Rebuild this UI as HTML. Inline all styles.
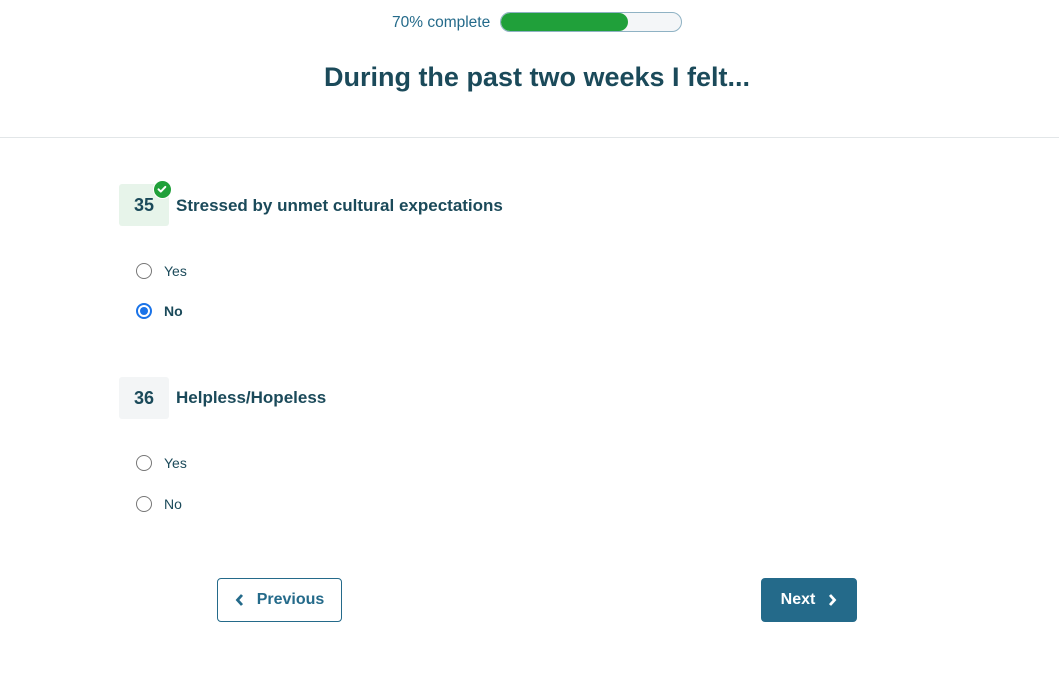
<!DOCTYPE html>
<html><head><style>
*{margin:0;padding:0;box-sizing:border-box}
body{width:1059px;height:694px;background:#fff;font-family:"Liberation Sans",sans-serif;color:#1b4a5a;position:relative;overflow:hidden}
.abs{position:absolute}
.prog-t{left:392px;top:14px;font-size:15.5px;color:#246a8a}
.bar{left:500px;top:12px;width:182px;height:20px;border:1px solid #8fb2c4;border-radius:10px;background:#f4f6f8;overflow:hidden}
.fill{position:absolute;left:0;top:0;height:100%;width:127px;background:#20a03a;border-radius:10px}
h1{position:absolute;left:0;width:1074px;text-align:center;top:62px;font-size:27px;font-weight:bold;color:#1b4a5a}
.hr{left:0;top:137px;width:1059px;height:1px;background:#e2e6e8}
.num{width:50px;height:42px;border-radius:3px;font-size:18px;font-weight:bold;display:flex;align-items:center;justify-content:center}
.q{font-size:17px;font-weight:bold}
.radio{width:16px;height:16px;border:1.5px solid #777;border-radius:50%}
.sel{border:2px solid #1a73e8}
.sel::after{content:"";position:absolute;left:2px;top:2px;width:8px;height:8px;border-radius:50%;background:#1a73e8}
.lab{font-size:14px}
.btn{height:44px;border-radius:4px;font-size:16px;font-weight:bold;display:flex;align-items:center;justify-content:center}
</style></head><body>
<div class="abs prog-t">70% complete</div>
<div class="abs bar"><div class="fill"></div></div>
<h1>During the past two weeks I felt...</h1>
<div class="abs hr"></div>

<div class="abs num" style="left:119px;top:184px;background:#e7f4ea">35</div>
<div class="abs" style="left:153px;top:180px;width:19px;height:19px;border-radius:50%;background:#20a03a;border:1.5px solid #fff"><svg width="16" height="16" viewBox="0 0 16 16"><path d="M4.5 8.3l2.3 2.3 4.5-4.7" stroke="#fff" stroke-width="2" fill="none" stroke-linecap="round" stroke-linejoin="round"/></svg></div>
<div class="abs q" style="left:176px;top:196px">Stressed by unmet cultural expectations</div>
<div class="abs radio" style="left:136px;top:263px"></div><div class="abs lab" style="left:164px;top:263px">Yes</div>
<div class="abs radio sel" style="left:136px;top:303px"></div><div class="abs lab" style="left:164px;top:303px;font-weight:bold">No</div>

<div class="abs num" style="left:119px;top:377px;background:#f3f5f6">36</div>
<div class="abs q" style="left:176px;top:388px">Helpless/Hopeless</div>
<div class="abs radio" style="left:136px;top:455px"></div><div class="abs lab" style="left:164px;top:455px">Yes</div>
<div class="abs radio" style="left:136px;top:496px"></div><div class="abs lab" style="left:164px;top:496px">No</div>

<div class="abs btn" style="left:217px;top:578px;width:125px;border:1px solid #246a8a;color:#246a8a"><svg width="10" height="14" viewBox="0 0 10 14" style="margin-right:12px"><path d="M7 2L2.5 7 7 12" stroke="#246a8a" stroke-width="2.8" fill="none"/></svg>Previous</div>
<div class="abs btn" style="left:761px;top:578px;width:96px;background:#246a8a;color:#fff">Next<svg width="10" height="14" viewBox="0 0 10 14" style="margin-left:12px"><path d="M3 2L7.5 7 3 12" stroke="#fff" stroke-width="2.8" fill="none"/></svg></div>
</body></html>
